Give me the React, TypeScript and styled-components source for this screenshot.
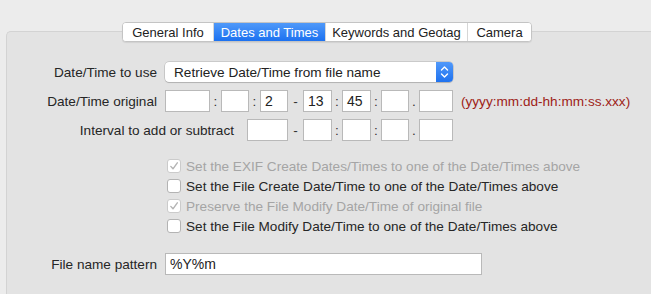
import React from 'react';
import styled, { createGlobalStyle } from 'styled-components';

const GlobalStyle = createGlobalStyle`
  html, body {
    margin: 0;
    padding: 0;
    background: #ececec;
    overflow: hidden;
  }
  body {
    font-family: 'Liberation Sans', Arial, sans-serif;
    font-size: 13.6px;
    color: #262626;
  }
`;

const Page = styled.div`
  width: 651px;
  height: 294px;
  padding-top: 22px;
  box-sizing: border-box;
  display: flex;
  flex-direction: column;
`;

const TabStrip = styled.div`
  position: relative;
  z-index: 1;
  display: flex;
  justify-content: center;
  padding-left: 3px;
  margin-bottom: -11px;
`;

const TabGroup = styled.div`
  display: flex;
  height: 18px;
  border: 1px solid #c4c4c4;
  border-radius: 4px;
  background: #fff;
  box-shadow: 0 1px 1px rgba(0, 0, 0, 0.08);
  overflow: hidden;
`;

const Tab = styled.div<{ $active?: boolean; $w: number }>`
  width: ${p => p.$w}px;
  display: flex;
  align-items: center;
  justify-content: center;
  box-sizing: border-box;
  font-size: 13px;
  color: ${p => (p.$active ? '#fff' : '#222')};
  background: ${p => (p.$active ? 'linear-gradient(#4f99f9, #1c71f0)' : '#fff')};
  & + & {
    border-left: 1px solid ${p => (p.$active ? '#2b7cf2' : '#d6d6d6')};
  }
`;

const Panel = styled.div`
  flex: 1;
  margin-left: 6px;
  box-sizing: border-box;
  background: #e3e3e3;
  border: 1px solid #d3d3d3;
  border-right: none;
  border-bottom: none;
  border-top-left-radius: 5px;
  padding-top: 30px;
`;

const Row = styled.div<{ $top?: number }>`
  display: flex;
  align-items: center;
  margin-top: ${p => p.$top ?? 0}px;
`;

const Label = styled.div<{ $w: number; $gap: number }>`
  width: ${p => p.$w}px;
  margin-right: ${p => p.$gap}px;
  text-align: right;
  white-space: nowrap;
`;

const Select = styled.div`
  width: 288px;
  height: 20px;
  box-sizing: border-box;
  display: flex;
  background: #fff;
  border-radius: 4px;
  box-shadow: 0 0 0 0.5px rgba(0, 0, 0, 0.22), 0 1px 1px rgba(0, 0, 0, 0.12);
  overflow: hidden;
`;

const SelectText = styled.div`
  flex: 1;
  display: flex;
  align-items: center;
  padding-left: 9px;
  color: #222;
`;

const Stepper = styled.div`
  width: 17px;
  display: flex;
  align-items: center;
  justify-content: center;
  background: linear-gradient(#5199fa, #1f72ef);
`;

const Field = styled.div<{ $w: number }>`
  width: ${p => p.$w}px;
  height: 22px;
  box-sizing: border-box;
  background: #fff;
  border: 1px solid #b9b9b9;
  display: flex;
  align-items: center;
  padding-left: 4px;
  font-size: 14px;
  color: #222;
`;

const Sep = styled.div<{ $w: number }>`
  width: ${p => p.$w}px;
  text-align: center;
  color: #333;
`;

const Hint = styled.div`
  margin-left: 8px;
  color: #9e1d17;
  white-space: nowrap;
`;

const CheckList = styled.div`
  margin-top: 15px;
  margin-left: 160px;
  display: flex;
  flex-direction: column;
`;

const CheckRow = styled.div<{ $disabled?: boolean }>`
  height: 20px;
  display: flex;
  align-items: center;
  color: ${p => (p.$disabled ? '#a5a5a5' : '#262626')};
  white-space: nowrap;
`;

const Box = styled.div<{ $disabled?: boolean }>`
  width: 14px;
  height: 14px;
  box-sizing: border-box;
  margin-right: 5px;
  border-radius: 3px;
  background: #fff;
  border: 1px solid ${p => (p.$disabled ? '#cbcbcb' : '#b3b3b3')};
  display: flex;
  align-items: center;
  justify-content: center;
`;

const TextInput = styled.div`
  width: 317px;
  height: 22px;
  box-sizing: border-box;
  background: #fff;
  border: 1px solid #b9b9b9;
  display: flex;
  align-items: center;
  padding-left: 4px;
  font-size: 14px;
  color: #222;
`;

const Chevrons = () => (
  <svg width="9" height="14" viewBox="0 0 9 14" fill="none" stroke="#fff" strokeWidth="1.4" strokeLinecap="round" strokeLinejoin="round">
    <path d="M1.5 5 L4.5 2 L7.5 5" />
    <path d="M1.5 9 L4.5 12 L7.5 9" />
  </svg>
);

const Check = () => (
  <svg width="10" height="10" viewBox="0 0 10 10" fill="none" stroke="#b4b4b4" strokeWidth="1.4" strokeLinecap="round" strokeLinejoin="round">
    <path d="M1.8 5.4 L4 7.8 L8.3 1.8" />
  </svg>
);

const checks = [
  { text: 'Set the EXIF Create Dates/Times to one of the Date/Times above', checked: true, disabled: true },
  { text: 'Set the File Create Date/Time to one of the Date/Times above', checked: false, disabled: false },
  { text: 'Preserve the File Modify Date/Time of original file', checked: true, disabled: true },
  { text: 'Set the File Modify Date/Time to one of the Date/Times above', checked: false, disabled: false },
];

const App: React.FC = () => {
  return (
    <Page>
      <GlobalStyle />
      <TabStrip>
        <TabGroup>
          <Tab $w={90}>General Info</Tab>
          <Tab $w={112} $active>Dates and Times</Tab>
          <Tab $w={142}>Keywords and Geotag</Tab>
          <Tab $w={64}>Camera</Tab>
        </TabGroup>
      </TabStrip>
      <Panel>
        <Row>
          <Label $w={150} $gap={8}>Date/Time to use</Label>
          <Select>
            <SelectText>Retrieve Date/Time from file name</SelectText>
            <Stepper>
              <Chevrons />
            </Stepper>
          </Select>
        </Row>
        <Row $top={8}>
          <Label $w={150} $gap={8}>Date/Time original</Label>
          <Field $w={45} />
          <Sep $w={11}>:</Sep>
          <Field $w={28} />
          <Sep $w={11}>:</Sep>
          <Field $w={28}>2</Field>
          <Sep $w={15}>-</Sep>
          <Field $w={29}>13</Field>
          <Sep $w={10}>:</Sep>
          <Field $w={29}>45</Field>
          <Sep $w={10}>:</Sep>
          <Field $w={28} />
          <Sep $w={10}>.</Sep>
          <Field $w={34} />
          <Hint>(yyyy:mm:dd-hh:mm:ss.xxx)</Hint>
        </Row>
        <Row $top={7}>
          <Label $w={227} $gap={13}>Interval to add or subtract</Label>
          <Field $w={41} />
          <Sep $w={15}>-</Sep>
          <Field $w={29} />
          <Sep $w={10}>:</Sep>
          <Field $w={29} />
          <Sep $w={10}>:</Sep>
          <Field $w={28} />
          <Sep $w={10}>.</Sep>
          <Field $w={34} />
        </Row>
        <CheckList>
          {checks.map(c => (
            <CheckRow key={c.text} $disabled={c.disabled}>
              <Box $disabled={c.disabled}>{c.checked && <Check />}</Box>
              {c.text}
            </CheckRow>
          ))}
        </CheckList>
        <Row $top={17}>
          <Label $w={150} $gap={8}>File name pattern</Label>
          <TextInput>%Y%m</TextInput>
        </Row>
      </Panel>
    </Page>
  );
};

export default App;
